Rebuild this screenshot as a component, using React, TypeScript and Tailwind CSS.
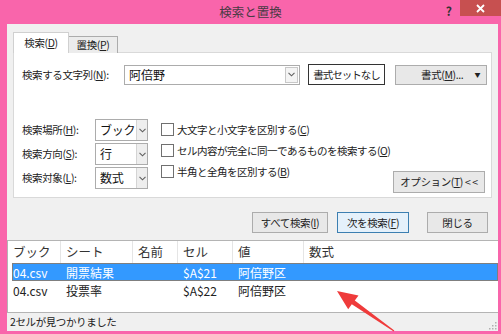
import React from "react";

const jp = "font-['Meiryo_UI','Noto_Sans_CJK_JP',sans-serif]";
// UI label text, squeezed a little to get close to Meiryo UI widths
const ui = "text-[10.5px] tracking-[-0.4px] text-[#222] whitespace-nowrap";

function Chevron() {
  return (
    <svg width="7" height="5" viewBox="0 0 7 5" className="block">
      <path d="M0.5 0.8 L3.5 3.8 L6.5 0.8" fill="none" stroke="#606060" strokeWidth="1.1" />
    </svg>
  );
}

function Combo({ value }: { value: string }) {
  return (
    <div className="flex h-[22px] w-[53px] border border-[#acacac] bg-white">
      <span className="flex-1 pl-[4px] text-[12px] leading-[20px] tracking-[-0.3px] text-[#111]">{value}</span>
      <span className="flex w-[11px] items-center justify-center border-l border-[#d4d4d4] bg-[#eeeeee]">
        <Chevron />
      </span>
    </div>
  );
}

function Check({ children }: { children: React.ReactNode }) {
  return (
    <div className="flex h-[13px] items-center">
      <span className="h-[13px] w-[13px] shrink-0 border border-[#707070] bg-white" />
      <span className="ml-[3px] text-[10.5px] leading-[13px] tracking-[-0.5px] text-[#222] whitespace-nowrap">
        {children}
      </span>
    </div>
  );
}

function Btn({ children, className = "" }: { children: React.ReactNode; className?: string }) {
  return (
    <div className={"flex items-center justify-center border border-[#acacac] bg-[#e8e8e8] " + ui + " " + className}>
      {children}
    </div>
  );
}

export default function App() {
  const cols = ["w-[53px]", "w-[72px]", "w-[45px]", "w-[55px]", "w-[71px]", "flex-1"];
  const head = ["ブック", "シート", "名前", "セル", "値", "数式"];
  const rows = [
    ["04.csv", "開票結果", "", "$A$21", "阿倍野区", ""],
    ["04.csv", "投票率", "", "$A$22", "阿倍野区", ""],
  ];

  return (
    <div className={"relative flex h-[334px] w-[501px] flex-col bg-[#f965ab] " + jp}>
      {/* title bar */}
      <div className="flex h-[24px] shrink-0">
        <div className="flex-1" />
        <div className="flex items-center text-[12.5px] text-[#4a3a44]">検索と置換</div>
        <div className="flex flex-1 items-start justify-end">
          <span className="mr-[8px] mt-[2px] text-[12px] font-bold text-[#333]">?</span>
          <div className="flex h-[16px] w-[41px] items-center justify-center bg-[#c75050]">
            <svg width="9" height="9" viewBox="0 0 9 9">
              <path d="M1 1 L8 8 M8 1 L1 8" stroke="#fff" strokeWidth="1.8" />
            </svg>
          </div>
        </div>
      </div>

      {/* body */}
      <div className="ml-[7px] mr-[3px] flex h-[307px] flex-col bg-[#f0f0f0]">
        {/* tabs */}
        <div className="relative z-10 -mb-px ml-[6px] mt-[8px] flex items-end">
          <div className={"flex h-[21px] w-[56px] items-center justify-center border border-b-0 border-[#d0d0d0] bg-white " + ui}>
            検索(<u>D</u>)
          </div>
          <div className={"flex h-[17px] w-[49px] items-center justify-center border border-b-0 border-l-0 border-[#acacac] bg-[#ececec] " + ui}>
            置換(<u>P</u>)
          </div>
        </div>

        {/* tab panel */}
        <div className="ml-[6px] flex h-[146px] w-[479px] flex-col border border-[#d9d9d9] bg-white pl-[8px] pt-[11px]">
          <div className="flex items-center">
            <span className={"w-[102px] " + ui}>
              検索する文字列(<u>N</u>):
            </span>
            <div className="flex h-[20px] w-[176px] border border-[#acacac] bg-white">
              <span className="flex-1 pl-[4px] text-[12px] leading-[18px] text-[#111]">阿倍野</span>
              <span className="my-[1px] mr-[1px] flex w-[13px] items-center justify-center border border-[#c8c8c8] bg-[#f4f4f4]">
                <Chevron />
              </span>
            </div>
            <div className="ml-[8px] flex h-[21px] w-[77px] items-center justify-center border border-[#333] bg-white text-[10.5px] tracking-[-1px] text-[#222] whitespace-nowrap">
              書式セットなし
            </div>
            <Btn className="ml-[10px] h-[20px] w-[92px]">
              <span className="ml-[14px] flex-1 text-center">
                書式(<u>M</u>)...
              </span>
              <span className="mr-[6px] text-[6px]">▼</span>
            </Btn>
          </div>

          <div className="mt-[34px] flex">
            <div className="flex shrink-0 flex-col gap-[2px]">
              {[
                ["検索場所(", "H", "):", "ブック"],
                ["検索方向(", "S", "):", "行"],
                ["検索対象(", "L", "):", "数式"],
              ].map(([a, k, b, v]) => (
                <div key={k} className="flex items-center">
                  <span className={"w-[73px] " + ui}>
                    {a}
                    <u>{k}</u>
                    {b}
                  </span>
                  <Combo value={v} />
                </div>
              ))}
            </div>
            <div className="ml-[13px] mt-[4px] flex w-[220px] shrink-0 flex-col gap-[8px]">
              <Check>
                大文字と小文字を区別する(<u>C</u>)
              </Check>
              <Check>
                セル内容が完全に同一であるものを検索する(<u>O</u>)
              </Check>
              <Check>
                半角と全角を区別する(<u>B</u>)
              </Check>
            </div>
            <Btn className="ml-auto mr-[6px] mt-[52px] h-[22px] w-[92px] shrink-0">
              オプション(<u>T</u>)&nbsp;&lt; &lt;
            </Btn>
          </div>
        </div>

        {/* action buttons */}
        <div className="mt-[14px] flex justify-end pr-[10px]">
          <Btn className="h-[21px] w-[76px]">
            すべて検索(<u>I</u>)
          </Btn>
          <Btn className="ml-[9px] h-[21px] w-[72px] !border-[#3c7fb1] !bg-[#e5f1fb]">
            次を検索(<u>F</u>)
          </Btn>
          <Btn className="ml-[18px] h-[21px] w-[61px]">閉じる</Btn>
        </div>

        {/* results list */}
        <div className="mt-[7px] flex h-[73px] flex-col border-y border-l border-[#b4b4b4] bg-white">
          <div className="flex h-[22px] shrink-0">
            {head.map((h, i) => (
              <div
                key={h}
                className={
                  cols[i] +
                  " flex items-center pl-[5px] text-[12.5px] text-[#333] " +
                  (i < 5 ? "border-r border-[#e5e5e5]" : "")
                }
              >
                {h}
              </div>
            ))}
          </div>
          {rows.map((r, ri) => (
            <div
              key={ri}
              className={
                "flex h-[18px] shrink-0 items-center " +
                (ri === 0
                  ? "ml-[4px] bg-[#3399ff] text-white outline outline-1 -outline-offset-1 outline-[#7f7f7f]"
                  : "text-[#222]")
              }
            >
              {r.map((c, i) => (
                <div
                  key={i}
                  className={
                    (ri === 0 && i === 0 ? "w-[49px] pl-[1px]" : cols[i] + " pl-[5px]") +
                    " text-[12px] leading-[17px] whitespace-nowrap"
                  }
                >
                  {c}
                </div>
              ))}
            </div>
          ))}
        </div>

        {/* status bar */}
        <div className="flex h-[17px] items-center justify-between pl-[3px]">
          <span className={ui}>2セルが見つかりました</span>
          <svg width="10" height="10" viewBox="0 0 10 10" className="mr-[1px] self-end">
            <g fill="#b0b0b0">
              <rect x="8" y="2" width="1.5" height="1.5" />
              <rect x="5" y="5" width="1.5" height="1.5" />
              <rect x="8" y="5" width="1.5" height="1.5" />
              <rect x="2" y="8" width="1.5" height="1.5" />
              <rect x="5" y="8" width="1.5" height="1.5" />
              <rect x="8" y="8" width="1.5" height="1.5" />
            </g>
          </svg>
        </div>
      </div>

      {/* red annotation arrow */}
      <svg className="pointer-events-none absolute left-0 top-0" width="501" height="334" viewBox="0 0 501 334">
        <polygon
          points="337,291 358.5,295.5 354.8,300.6 394.3,330.6 393.7,331.4 351.8,304.2 348.2,309.3"
          fill="#ef3b3b"
        />
      </svg>
    </div>
  );
}
